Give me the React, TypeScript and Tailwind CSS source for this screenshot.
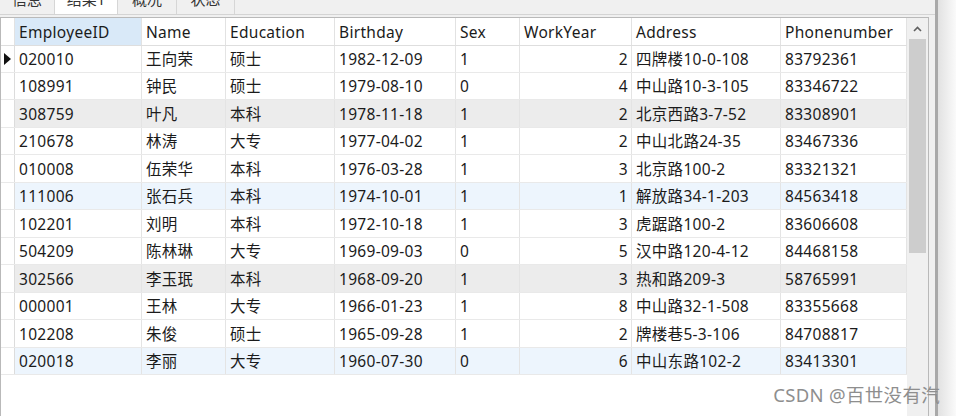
import React from "react";

const rows = [
  ["020010", "王向荣", "硕士", "1982-12-09", "1", "2", "四牌楼10-0-108", "83792361"],
  ["108991", "钟民", "硕士", "1979-08-10", "0", "4", "中山路10-3-105", "83346722"],
  ["308759", "叶凡", "本科", "1978-11-18", "1", "2", "北京西路3-7-52", "83308901"],
  ["210678", "林涛", "大专", "1977-04-02", "1", "2", "中山北路24-35", "83467336"],
  ["010008", "伍荣华", "本科", "1976-03-28", "1", "3", "北京路100-2", "83321321"],
  ["111006", "张石兵", "本科", "1974-10-01", "1", "1", "解放路34-1-203", "84563418"],
  ["102201", "刘明", "本科", "1972-10-18", "1", "3", "虎踞路100-2", "83606608"],
  ["504209", "陈林琳", "大专", "1969-09-03", "0", "5", "汉中路120-4-12", "84468158"],
  ["302566", "李玉珉", "本科", "1968-09-20", "1", "3", "热和路209-3", "58765991"],
  ["000001", "王林", "大专", "1966-01-23", "1", "8", "中山路32-1-508", "83355668"],
  ["102208", "朱俊", "硕士", "1965-09-28", "1", "2", "牌楼巷5-3-106", "84708817"],
  ["020018", "李丽", "大专", "1960-07-30", "0", "6", "中山东路102-2", "83413301"],
];

const headers = ["EmployeeID", "Name", "Education", "Birthday", "Sex", "WorkYear", "Address", "Phonenumber"];

// row heights alternate a little in the screenshot
const heights = ["h-[27px]", "h-[27px]", "h-[28px]", "h-[27px]", "h-[28px]", "h-[27px]", "h-[28px]", "h-[27px]", "h-[28px]", "h-[27px]", "h-[28px]", "h-[27px]"];
const rowBg = ["bg-white", "bg-white", "bg-[#ececec]", "bg-white", "bg-white", "bg-[#edf5fd]", "bg-white", "bg-white", "bg-[#ececec]", "bg-white", "bg-white", "bg-[#edf5fd]"];

const cols = "grid grid-cols-[14px_127px_84px_109px_121px_64px_112px_149px_126px]";

const tabs = [
  { label: "信息", w: "w-[55px]", active: false },
  { label: "结果1", w: "w-[63px]", active: true },
  { label: "概况", w: "w-[59px]", active: false },
  { label: "状态", w: "w-[58px]", active: false },
];

export default function App() {
  return (
    <div className="relative flex w-[956px] h-[416px] overflow-hidden bg-[#f0f0f0] text-[#1b1b1b] font-['Noto_Sans','Noto_Sans_CJK_SC',sans-serif]">
      <div className="flex flex-col w-[935px]">
        {/* tabs, cut off at the top */}
        <div className="flex h-[14px] overflow-hidden border-b border-[#d4d4d4] box-content">
          {tabs.map((t) => (
            <div
              key={t.label}
              className={`${t.w} h-[14px] border-r border-[#d6d6d6] ${t.active ? "bg-white" : "bg-[#f0f0f0]"}`}
            >
              <div className="-mt-[9px] text-[15px] leading-[16px] text-center text-[#333]">{t.label}</div>
            </div>
          ))}
        </div>
        <div className="h-[2px]" />

        <div className="flex flex-1 w-[929px] bg-white border-t border-l border-r border-[#b9b9b9]">
          <div className="flex flex-col w-[906px] text-[15.5px] tracking-[0.3px]">
            {/* header */}
            <div className={`${cols} h-[28px] border-b border-[#dedede]`}>
              <div className="border-r border-[#e2e2e2] bg-white" />
              {headers.map((h, i) => (
                <div
                  key={h}
                  className={`flex items-center pl-[4px] pt-[2px] border-r border-[#e2e2e2] ${i === 0 ? "bg-[#d9e9f8]" : "bg-white"}`}
                >
                  {h}
                </div>
              ))}
            </div>

            {rows.map((r, ri) => (
              <div key={r[0]} className={`${cols} ${heights[ri]} ${rowBg[ri]} border-b border-[#e9e9e9]`}>
                <div className="flex items-center justify-center bg-white border-r border-[#dcdcdc]">
                  {ri === 0 && (
                    <svg width="7" height="12" viewBox="0 0 7 12">
                      <polygon points="0,0 7,6 0,12" fill="#111" />
                    </svg>
                  )}
                </div>
                {r.map((c, ci) => (
                  <div
                    key={ci}
                    className={`flex items-center pt-[2px] border-r border-[#e4e4e4] whitespace-nowrap overflow-hidden ${ci === 5 ? "justify-end pr-[3px]" : "pl-[4px]"}`}
                  >
                    {c}
                  </div>
                ))}
              </div>
            ))}
            <div className="flex-1 flex">
              <div className="w-[14px]" />
            </div>
          </div>

          {/* scrollbar */}
          <div className="flex flex-col items-center w-[21px] bg-[#f0f0f0]">
            <div className="flex items-center justify-center h-[21px]">
              <svg width="9" height="6" viewBox="0 0 9 6">
                <polyline points="1,5 4.5,1.5 8,5" fill="none" stroke="#606060" strokeWidth="1.6" />
              </svg>
            </div>
            <div className="w-[17px] h-[214px] bg-[#cdcdcd]" />
          </div>
        </div>
      </div>

      {/* right window edge */}
      <div className="flex w-[21px]">
        <div className="w-[3px] bg-[#a9a9a9]" />
        <div className="flex-1 bg-gradient-to-r from-[#e2e2e2] to-[#fafafa]" />
      </div>

      <div className="absolute right-[16px] bottom-[9px] text-[18.5px] leading-[24px] tracking-[0.3px] text-[#8e8e8e] whitespace-nowrap">
        CSDN @百世没有汽
      </div>
    </div>
  );
}
